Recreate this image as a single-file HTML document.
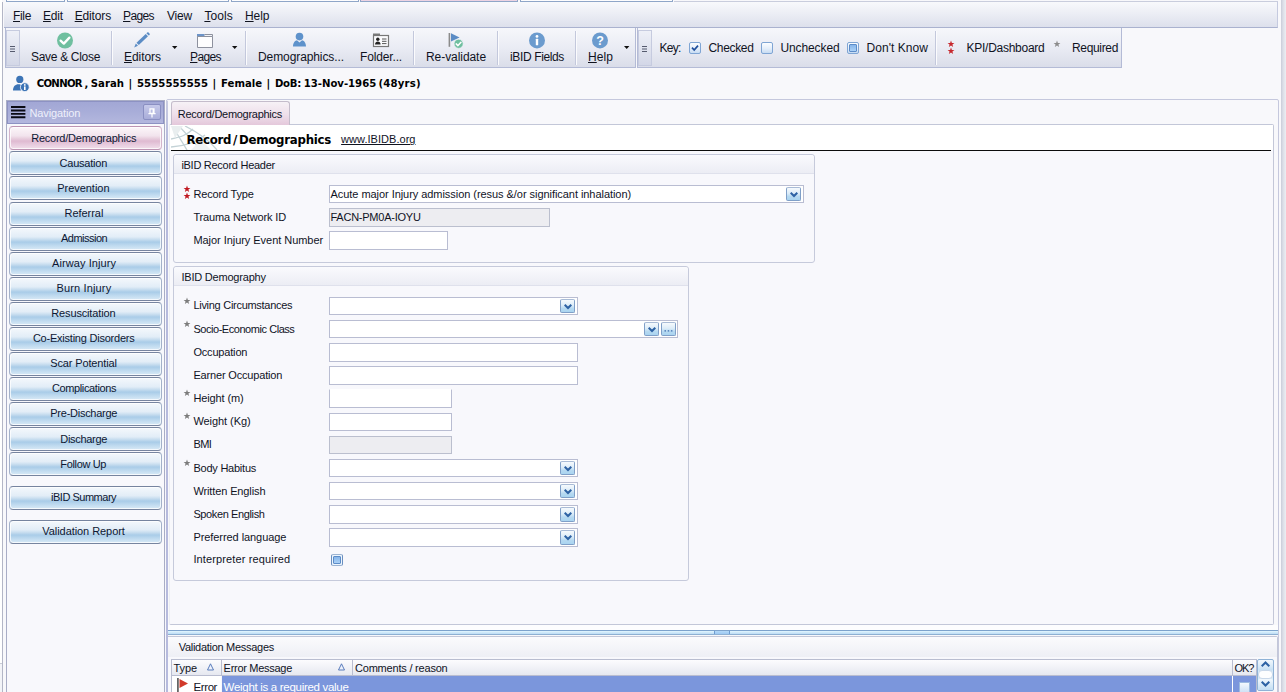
<!DOCTYPE html><html><head><meta charset="utf-8"><title>iBID</title><style>
*{box-sizing:border-box;margin:0;padding:0}
html,body{width:1286px;height:692px;overflow:hidden;background:#f8f8fb}
body{position:relative;font-family:"Liberation Sans",sans-serif;font-size:11px;color:#10131f}
.a{position:absolute}
.t{position:absolute;white-space:pre}
u{text-decoration:underline;text-underline-offset:1px;text-decoration-thickness:1px}
.tbar{background:linear-gradient(#f6f7fb,#eaecf4 50%,#dadde9);border:1px solid #b4bbd6;border-top:0}
.grip{background:linear-gradient(#eef0f7,#d3d7e7);border:1px solid #c6cbdf}
.sep{width:1px;background:#c3c8dc;box-shadow:1px 0 0 #fbfbfd}
.nb{border:1px solid #a3b1c9;border-top-color:#76849f;border-bottom-color:#76849f;border-radius:4px;background:linear-gradient(#f4f8fc 0%,#e2edf7 40%,#c7ddef 52%,#a9cce8 64%,#c2dcf0 82%,#d9eaf6 100%);box-shadow:inset 0 0 0 1px rgba(255,255,255,.75)}
.nb.sel{border-color:#d3b4cb;border-top-color:#bd93b2;border-bottom-color:#bd93b2;background:linear-gradient(#fcf7fa 0%,#f2e4ed 40%,#e8cfde 52%,#dfbad1 64%,#e8cddf 82%,#f1dfea 100%)}
.gb{border:1px solid #c6cadb;border-radius:3px;background:#f8f8fc}
.gh{left:0;top:0;right:0;height:19px;background:linear-gradient(#fafafd,#ecedf4);border-bottom:1px solid #dfe1ec;border-radius:3px 3px 0 0}
.in{background:#fff;border:1px solid #b9bdd2}
.in.ro{background:#ededf1;border-color:#bbbfce}
.dd{border:1px solid #7f9fc8;border-top-color:#a9bbd6;border-radius:2px;background:linear-gradient(#f6fafd,#dcecf8 45%,#b6d9f1 70%,#a9d4f0)}
</style></head><body>
<div class="a" style="left:0px;top:0px;width:2px;height:692px;background:#fff"></div>
<div class="a" style="left:2px;top:2px;width:1px;height:690px;background:#b3b6c6"></div>
<div class="a" style="left:0px;top:663px;width:2px;height:1px;background:#c9ccd6"></div>
<div class="a" style="left:0px;top:664px;width:2px;height:28px;background:#f3f4f8"></div>
<div class="a" style="left:1281px;top:0px;width:5px;height:692px;background:linear-gradient(90deg,#c9ccd9,#dcdee7 40%,#eceef3)"></div>
<div class="a" style="left:6px;top:0px;width:59px;height:2px;background:#fdfdfe;border:1px solid #8fa6c8;border-top:0"></div>
<div class="a" style="left:67px;top:0px;width:162px;height:2px;background:#fdfdfe;border:1px solid #8fa6c8;border-top:0"></div>
<div class="a" style="left:231px;top:0px;width:128px;height:2px;background:#fdfdfe;border:1px solid #8fa6c8;border-top:0"></div>
<div class="a" style="left:360px;top:0px;width:158px;height:2px;background:#ecd3e3;border:1px solid #8fa6c8;border-top:0"></div>
<div class="a" style="left:520px;top:0px;width:153px;height:2px;background:#fdfdfe;border:1px solid #8fa6c8;border-top:0"></div>
<div class="a" style="left:674px;top:1px;width:604px;height:1px;background:#c9cddd"></div>
<div class="a" style="left:4px;top:2px;width:1274px;height:26px;background:linear-gradient(#f8f9fc,#eceef5 45%,#dde0ec);border-bottom:1px solid #aab2cf;border-right:1px solid #c5cadf"></div>
<div class="t" style='left:13.0px;top:8.24px;font-size:12px;letter-spacing:-0.340px;line-height:16px;height:16px'><u>F</u>ile</div>
<div class="t" style='left:43.0px;top:8.24px;font-size:12px;letter-spacing:-0.176px;line-height:16px;height:16px'><u>E</u>dit</div>
<div class="t" style='left:74.7px;top:8.24px;font-size:12px;letter-spacing:-0.151px;line-height:16px;height:16px'><u>E</u>ditors</div>
<div class="t" style='left:123.0px;top:8.24px;font-size:12px;letter-spacing:-0.609px;line-height:16px;height:16px'><u>P</u>ages</div>
<div class="t" style='left:167.0px;top:8.24px;font-size:12px;letter-spacing:-0.199px;line-height:16px;height:16px'>View</div>
<div class="t" style='left:204.4px;top:8.24px;font-size:12px;letter-spacing:0.057px;line-height:16px;height:16px'><u>T</u>ools</div>
<div class="t" style='left:245.0px;top:8.24px;font-size:12px;letter-spacing:-0.072px;line-height:16px;height:16px'><u>H</u>elp</div>
<div class="a tbar" style="left:5px;top:28px;width:631px;height:40px;"></div>
<div class="a tbar" style="left:637px;top:28px;width:485px;height:40px;"></div>
<div class="a grip" style="left:6px;top:30px;width:14px;height:36px;"></div>
<svg class="a" style="left:10px;top:45.5px" width="6" height="7" viewBox="0 0 6 7"><path d="M0 0.5 H5 M0 3 H5 M0 5.5 H5" stroke="#555a6e" stroke-width="1"/></svg>
<div class="a grip" style="left:638px;top:30px;width:14px;height:36px;"></div>
<svg class="a" style="left:642px;top:45.5px" width="6" height="7" viewBox="0 0 6 7"><path d="M0 0.5 H5 M0 3 H5 M0 5.5 H5" stroke="#555a6e" stroke-width="1"/></svg>
<div class="a sep" style="left:111px;top:31px;width:1px;height:34px;"></div>
<div class="a sep" style="left:245px;top:31px;width:1px;height:34px;"></div>
<div class="a sep" style="left:413px;top:31px;width:1px;height:34px;"></div>
<div class="a sep" style="left:497px;top:31px;width:1px;height:34px;"></div>
<div class="a sep" style="left:575px;top:31px;width:1px;height:34px;"></div>
<div class="a sep" style="left:935px;top:31px;width:1px;height:34px;"></div>
<div class="t" style='left:31.0px;top:49.14px;font-size:12px;letter-spacing:-0.309px;line-height:16px;height:16px'>Save &amp; Close</div>
<div class="t" style='left:124.0px;top:49.14px;font-size:12px;letter-spacing:-0.051px;line-height:16px;height:16px'><u>E</u>ditors</div>
<div class="t" style='left:190.0px;top:49.14px;font-size:12px;letter-spacing:-0.609px;line-height:16px;height:16px'><u>P</u>ages</div>
<div class="t" style='left:258.0px;top:49.14px;font-size:12px;letter-spacing:-0.092px;line-height:16px;height:16px'>Demographics...</div>
<div class="t" style='left:360.0px;top:49.14px;font-size:12px;letter-spacing:-0.151px;line-height:16px;height:16px'>Folder...</div>
<div class="t" style='left:426.0px;top:49.14px;font-size:12px;letter-spacing:-0.064px;line-height:16px;height:16px'>Re-validate</div>
<div class="t" style='left:510.0px;top:49.14px;font-size:12px;letter-spacing:-0.365px;line-height:16px;height:16px'>iBID Fields</div>
<div class="t" style='left:588.0px;top:49.14px;font-size:12px;letter-spacing:0.078px;line-height:16px;height:16px'><u>H</u>elp</div>
<div class="t" style='left:659.5px;top:39.84px;font-size:12px;letter-spacing:-0.754px;line-height:16px;height:16px'>Key:</div>
<div class="t" style='left:708.5px;top:39.84px;font-size:12px;letter-spacing:-0.339px;line-height:16px;height:16px'>Checked</div>
<div class="t" style='left:780.5px;top:39.84px;font-size:12px;letter-spacing:-0.116px;line-height:16px;height:16px'>Unchecked</div>
<div class="t" style='left:866.5px;top:39.84px;font-size:12px;letter-spacing:0.050px;line-height:16px;height:16px'>Don't Know</div>
<div class="t" style='left:966.5px;top:39.84px;font-size:12px;letter-spacing:-0.261px;line-height:16px;height:16px'>KPI/Dashboard</div>
<div class="t" style='left:1072.0px;top:39.84px;font-size:12px;letter-spacing:-0.338px;line-height:16px;height:16px'>Required</div>
<svg class="a" style="left:56px;top:32px" width="18" height="18" viewBox="0 0 18 18"><circle cx="9" cy="8.5" r="8" fill="#6fbf9f"/><path d="M4.6 8.6 L7.8 11.6 L13.4 5.6" fill="none" stroke="#fff" stroke-width="2.3" stroke-linecap="round" stroke-linejoin="round"/></svg>
<svg class="a" style="left:133px;top:32px" width="19" height="17" viewBox="0 0 19 17"><path d="M1.2 15.4 L2.8 11.5 L5 13.7 Z" fill="#5b8cc5"/><path d="M3.5 10.7 L12.7 1.9 L15 4.2 L5.8 13 Z" fill="#5b8cc5"/><path d="M13.4 1.2 L14.2 0.5 Q14.9 0 15.6 0.6 L16.5 1.5 Q17.1 2.2 16.5 2.9 L15.7 3.6 Z" fill="#5b8cc5"/></svg>
<svg class="a" style="left:196px;top:33px" width="18" height="16" viewBox="0 0 18 16"><rect x="1" y="1" width="7.5" height="3" fill="#6d94c8"/><path d="M1.5 3.5 H16.5 V14.5 H1.5 Z" fill="#fdfdfe" stroke="#8d919e" stroke-width="1"/><path d="M8.5 1.5 H16.5 V3.5" fill="none" stroke="#8d919e" stroke-width="1"/></svg>
<svg class="a" style="left:292px;top:32px" width="15" height="16" viewBox="0 0 15 16"><circle cx="7.5" cy="4.6" r="3.8" fill="#5e92cb"/><path d="M1 14.6 C1 10.5 3.2 8.6 5 8.2 L7.5 10.4 L10 8.2 C11.8 8.6 14 10.5 14 14.6 Z" fill="#5e92cb"/></svg>
<svg class="a" style="left:372px;top:33px" width="18" height="15" viewBox="0 0 18 15"><rect x="1" y="0.5" width="7" height="2.5" fill="#7a7a7a"/><rect x="1.5" y="2.5" width="15" height="11" fill="#fbfbfd" stroke="#777" stroke-width="1.2"/><circle cx="5.8" cy="6.3" r="1.7" fill="#222"/><path d="M3 11.5 C3 9.2 4.4 8.4 5.8 8.4 C7.2 8.4 8.6 9.2 8.6 11.5 Z" fill="#222"/><path d="M10 6 H14.5 M10 8.3 H14.5 M10 10.6 H14.5" stroke="#555" stroke-width="1"/></svg>
<svg class="a" style="left:447px;top:32px" width="18" height="18" viewBox="0 0 18 18"><rect x="1.6" y="1" width="1.6" height="13.8" fill="#8b8b8b"/><path d="M4 1.2 L12.6 5.4 L4 9.6 Z" fill="#5b8cc5"/><circle cx="11.6" cy="11.8" r="4.6" fill="#6fbf9f" stroke="#eef0f7" stroke-width="0.8"/><path d="M9.2 11.9 L11 13.6 L14 10.2" fill="none" stroke="#fff" stroke-width="1.5" stroke-linecap="round" stroke-linejoin="round"/></svg>
<svg class="a" style="left:528px;top:32px" width="18" height="18" viewBox="0 0 18 18"><circle cx="9" cy="8.4" r="8" fill="#6b9bce"/><circle cx="9" cy="4.4" r="1.4" fill="#fff"/><rect x="7.8" y="6.8" width="2.4" height="6.4" rx="0.5" fill="#fff"/></svg>
<svg class="a" style="left:591px;top:32px" width="18" height="18" viewBox="0 0 18 18"><circle cx="9" cy="8.4" r="8" fill="#6b9bce"/><text x="9" y="12.6" text-anchor="middle" font-family="Liberation Sans, sans-serif" font-weight="bold" font-size="12.5" fill="#fff">?</text></svg>
<svg class="a" style="left:172px;top:46px" width="6" height="4" viewBox="0 0 6 4"><path d="M0 0 H5.4 L2.7 3 Z" fill="#111"/></svg>
<svg class="a" style="left:231.5px;top:46px" width="6" height="4" viewBox="0 0 6 4"><path d="M0 0 H5.4 L2.7 3 Z" fill="#111"/></svg>
<svg class="a" style="left:624px;top:46.3px" width="6" height="4" viewBox="0 0 6 4"><path d="M0 0 H5.4 L2.7 3 Z" fill="#111"/></svg>
<div class="a" style="left:689px;top:42px;width:12px;height:12px;border:1px solid #7fa5d4;border-radius:2px;background:linear-gradient(#fbfdff,#e4eefa 55%,#c7dcf3)"></div>
<svg class="a" style="left:691px;top:44px" width="8" height="8" viewBox="0 0 8 8"><path d="M1 3.6 L3.2 6 L7 1.6" fill="none" stroke="#1f4e9c" stroke-width="1.7"/></svg>
<div class="a" style="left:761px;top:42px;width:12px;height:12px;border:1px solid #7fa5d4;border-radius:2px;background:linear-gradient(#fbfdff,#e4eefa 55%,#c7dcf3)"></div>
<div class="a" style="left:847px;top:42px;width:12px;height:12px;border:1px solid #7fa5d4;border-radius:2px;background:linear-gradient(#fbfdff,#e4eefa 55%,#c7dcf3)"></div>
<div class="a" style="left:849px;top:44px;width:8px;height:8px;background:linear-gradient(#86b5ea,#abd1f6);border:1px solid #5d8cc8;border-radius:1px"></div>
<svg class="a" style="left:947px;top:39.5px" width="8" height="8" viewBox="0 0 8 8"><path d="M4.00,0.50 L4.89,2.88 L7.42,2.99 L5.44,4.57 L6.12,7.01 L4.00,5.61 L1.88,7.01 L2.56,4.57 L0.58,2.99 L3.11,2.88Z" fill="#c6282d"/></svg>
<svg class="a" style="left:947px;top:46.5px" width="8" height="8" viewBox="0 0 8 8"><path d="M4.00,0.50 L4.89,2.88 L7.42,2.99 L5.44,4.57 L6.12,7.01 L4.00,5.61 L1.88,7.01 L2.56,4.57 L0.58,2.99 L3.11,2.88Z" fill="#c6282d"/></svg>
<svg class="a" style="left:1053px;top:39.5px" width="8" height="8" viewBox="0 0 8 8"><path d="M4.00,0.50 L4.89,2.88 L7.42,2.99 L5.44,4.57 L6.12,7.01 L4.00,5.61 L1.88,7.01 L2.56,4.57 L0.58,2.99 L3.11,2.88Z" fill="#8c8c8c"/></svg>
<svg class="a" style="left:12px;top:74px" width="20" height="20" viewBox="0 0 20 20"><circle cx="7.8" cy="5.4" r="3.6" fill="#3c74b6"/><path d="M1 16.6 C1 12.4 3.4 10.2 6.4 10.2 C8 10.2 9.4 10.8 10.2 11.8 C9 13 8.6 14.6 9 16.6 Z" fill="#3c74b6"/><circle cx="12.8" cy="13.2" r="4.4" fill="#3c74b6" stroke="#f7f7fb" stroke-width="0.8"/><circle cx="12.8" cy="10.9" r="0.9" fill="#fff"/><rect x="12" y="12.4" width="1.6" height="3.6" fill="#fff"/></svg>
<div class="t" style='left:36.7px;top:75.61px;font-size:11.25px;letter-spacing:-0.679px;line-height:16px;height:16px;font-family:"DejaVu Sans Condensed","DejaVu Sans",sans-serif;font-weight:bold;color:#000'>CONNOR</div>
<div class="t" style='left:84.6px;top:75.61px;font-size:11.25px;letter-spacing:0.000px;line-height:16px;height:16px;font-family:"DejaVu Sans Condensed","DejaVu Sans",sans-serif;font-weight:bold;color:#000'>,</div>
<div class="t" style='left:90.8px;top:75.61px;font-size:11.25px;letter-spacing:0.009px;line-height:16px;height:16px;font-family:"DejaVu Sans Condensed","DejaVu Sans",sans-serif;font-weight:bold;color:#000'>Sarah</div>
<div class="t" style='left:128.6px;top:75.61px;font-size:11.25px;letter-spacing:0.000px;line-height:16px;height:16px;font-family:"DejaVu Sans Condensed","DejaVu Sans",sans-serif;font-weight:bold;color:#000'>|</div>
<div class="t" style='left:137.0px;top:75.61px;font-size:11.25px;letter-spacing:0.056px;line-height:16px;height:16px;font-family:"DejaVu Sans Condensed","DejaVu Sans",sans-serif;font-weight:bold;color:#000'>5555555555</div>
<div class="t" style='left:212.4px;top:75.61px;font-size:11.25px;letter-spacing:0.000px;line-height:16px;height:16px;font-family:"DejaVu Sans Condensed","DejaVu Sans",sans-serif;font-weight:bold;color:#000'>|</div>
<div class="t" style='left:221.0px;top:75.61px;font-size:11.25px;letter-spacing:0.026px;line-height:16px;height:16px;font-family:"DejaVu Sans Condensed","DejaVu Sans",sans-serif;font-weight:bold;color:#000'>Female</div>
<div class="t" style='left:266.4px;top:75.61px;font-size:11.25px;letter-spacing:0.000px;line-height:16px;height:16px;font-family:"DejaVu Sans Condensed","DejaVu Sans",sans-serif;font-weight:bold;color:#000'>|</div>
<div class="t" style='left:274.9px;top:75.61px;font-size:11.25px;letter-spacing:-0.256px;line-height:16px;height:16px;font-family:"DejaVu Sans Condensed","DejaVu Sans",sans-serif;font-weight:bold;color:#000'>DoB:</div>
<div class="t" style='left:303.7px;top:75.61px;font-size:11.25px;letter-spacing:-0.017px;line-height:16px;height:16px;font-family:"DejaVu Sans Condensed","DejaVu Sans",sans-serif;font-weight:bold;color:#000'>13-Nov-1965</div>
<div class="t" style='left:378.4px;top:75.61px;font-size:11.25px;letter-spacing:0.207px;line-height:16px;height:16px;font-family:"DejaVu Sans Condensed","DejaVu Sans",sans-serif;font-weight:bold;color:#000'>(48yrs)</div>
<div class="a" style="left:6px;top:100px;width:159px;height:600px;border:1px solid #a9adc6;background:#f8f8fc"></div>
<div class="a" style="left:7px;top:101px;width:157px;height:22.5px;background:linear-gradient(#a2a7d5,#a9aed9 50%,#b3b7de);border:1px solid #8d92c3"></div>
<svg class="a" style="left:11px;top:106px" width="15" height="13" viewBox="0 0 15 13"><path d="M0 1 H14.4 M0 4.45 H14.4 M0 7.9 H14.4 M0 11.3 H14.4" stroke="#0a0a14" stroke-width="1.9"/></svg>
<div class="a" style="left:143px;top:104px;width:18px;height:16px;border:1px solid #8a8fc2;border-radius:2px;background:linear-gradient(#c6c9ea,#a9add9)"></div>
<svg class="a" style="left:148px;top:107.5px" width="8" height="10" viewBox="0 0 8 10"><path d="M2 0.8 H6 V5.4 H2 Z M0.4 5.6 H7.6 M4 5.6 V9.4" fill="none" stroke="#fff" stroke-width="1.2"/><rect x="4.6" y="1" width="1.4" height="4.4" fill="#fff"/></svg>
<div class="t" style='left:29.5px;top:104.99px;font-size:11px;letter-spacing:-0.128px;line-height:16px;height:16px;color:#eef0fb'>Navigation</div>
<div class="a nb sel" style="left:9px;top:126px;width:153px;height:24px;"></div>
<div class="t" style='left:31.2px;top:130.19px;font-size:11px;letter-spacing:-0.234px;line-height:16px;height:16px;color:#0d1733'>Record/Demographics</div>
<div class="a nb" style="left:9px;top:151px;width:153px;height:24px;"></div>
<div class="t" style='left:59.6px;top:155.19px;font-size:11px;letter-spacing:-0.227px;line-height:16px;height:16px;color:#0d1733'>Causation</div>
<div class="a nb" style="left:9px;top:176px;width:153px;height:24px;"></div>
<div class="t" style='left:57.2px;top:180.19px;font-size:11px;letter-spacing:-0.029px;line-height:16px;height:16px;color:#0d1733'>Prevention</div>
<div class="a nb" style="left:9px;top:202px;width:153px;height:24px;"></div>
<div class="t" style='left:64.5px;top:205.19px;font-size:11px;letter-spacing:-0.041px;line-height:16px;height:16px;color:#0d1733'>Referral</div>
<div class="a nb" style="left:9px;top:227px;width:153px;height:24px;"></div>
<div class="t" style='left:61.0px;top:230.19px;font-size:11px;letter-spacing:-0.517px;line-height:16px;height:16px;color:#0d1733'>Admission</div>
<div class="a nb" style="left:9px;top:252px;width:153px;height:24px;"></div>
<div class="t" style='left:52.0px;top:255.19px;font-size:11px;letter-spacing:0.087px;line-height:16px;height:16px;color:#0d1733'>Airway Injury</div>
<div class="a nb" style="left:9px;top:277px;width:153px;height:24px;"></div>
<div class="t" style='left:56.5px;top:280.19px;font-size:11px;letter-spacing:0.145px;line-height:16px;height:16px;color:#0d1733'>Burn Injury</div>
<div class="a nb" style="left:9px;top:302px;width:153px;height:24px;"></div>
<div class="t" style='left:51.3px;top:305.19px;font-size:11px;letter-spacing:-0.150px;line-height:16px;height:16px;color:#0d1733'>Resuscitation</div>
<div class="a nb" style="left:9px;top:327px;width:153px;height:24px;"></div>
<div class="t" style='left:32.9px;top:330.19px;font-size:11px;letter-spacing:-0.227px;line-height:16px;height:16px;color:#0d1733'>Co-Existing Disorders</div>
<div class="a nb" style="left:9px;top:352px;width:153px;height:24px;"></div>
<div class="t" style='left:50.3px;top:355.19px;font-size:11px;letter-spacing:-0.142px;line-height:16px;height:16px;color:#0d1733'>Scar Potential</div>
<div class="a nb" style="left:9px;top:377px;width:153px;height:24px;"></div>
<div class="t" style='left:52.0px;top:380.19px;font-size:11px;letter-spacing:-0.384px;line-height:16px;height:16px;color:#0d1733'>Complications</div>
<div class="a nb" style="left:9px;top:402px;width:153px;height:24px;"></div>
<div class="t" style='left:50.3px;top:405.19px;font-size:11px;letter-spacing:-0.262px;line-height:16px;height:16px;color:#0d1733'>Pre-Discharge</div>
<div class="a nb" style="left:9px;top:427px;width:153px;height:24px;"></div>
<div class="t" style='left:60.3px;top:431.19px;font-size:11px;letter-spacing:-0.303px;line-height:16px;height:16px;color:#0d1733'>Discharge</div>
<div class="a nb" style="left:9px;top:452px;width:153px;height:24px;"></div>
<div class="t" style='left:60.3px;top:456.19px;font-size:11px;letter-spacing:-0.345px;line-height:16px;height:16px;color:#0d1733'>Follow Up</div>
<div class="a nb" style="left:9px;top:486px;width:153px;height:23.5px;"></div>
<div class="t" style='left:51.0px;top:489.19px;font-size:11px;letter-spacing:-0.484px;line-height:16px;height:16px;color:#0d1733'>iBID Summary</div>
<div class="a nb" style="left:9px;top:520px;width:153px;height:23.5px;"></div>
<div class="t" style='left:42.3px;top:523.19px;font-size:11px;letter-spacing:-0.063px;line-height:16px;height:16px;color:#0d1733'>Validation Report</div>
<div class="a" style="left:166px;top:99px;width:1113px;height:600px;border:1px solid #c5c8dd;border-radius:2px;background:#f8f8fb"></div>
<div class="a" style="left:166px;top:101px;width:2px;height:600px;background:linear-gradient(#c9cce2,#b6badd 40px)"></div>
<div class="a" style="left:169px;top:124px;width:1105px;height:500.5px;border:1px solid #c3c7d8;border-left-color:#eceef3;border-radius:2px;background:#f8f8fc"></div>
<div class="a" style="left:171px;top:101px;width:119px;height:24px;border:1px solid #c4bccb;border-bottom:0;border-radius:3px 3px 0 0;background:linear-gradient(#f6f1f6,#eedfea 55%,#e4c8db)"></div>
<div class="t" style='left:177.8px;top:106.19px;font-size:11px;letter-spacing:-0.276px;line-height:16px;height:16px'>Record/Demographics</div>
<div class="a" style="left:170px;top:125px;width:1103px;height:25px;background:#fff"></div>
<svg class="a" style="left:171px;top:126px" width="54" height="24" viewBox="0 0 54 24"><g fill="none" stroke="#c3d2d6" stroke-width="1.3"><path d="M2 1 L16 24"/><path d="M8 0 L30 24"/><path d="M14 0 C26 6 38 14 46 24"/><path d="M0 13 C10 11 16 9 22 3"/><path d="M0 21 C14 20 26 16 34 9"/></g><path d="M0 0 L12 0 L4 12 Z" fill="#e9eeef"/><path d="M20 24 L40 24 L30 14 Z" fill="#eef2f3"/></svg>
<div class="a" style="left:170.5px;top:150px;width:1100.5px;height:1.2px;background:#0c0c0c"></div>
<div class="t" style='left:186.4px;top:132.13px;font-size:11.75px;letter-spacing:-0.246px;line-height:16px;height:16px;font-family:"DejaVu Sans",sans-serif;font-weight:bold;color:#000'>Record<span style="padding:0 1.9px">/</span>Demographics</div>
<div class="t" style='left:341.1px;top:131.49px;font-size:11px;letter-spacing:0.033px;line-height:16px;height:16px;text-decoration:underline;text-underline-offset:1px'>www.IBIDB.org</div>
<div class="a gb" style="left:173px;top:154px;width:642px;height:109px;"><div class="a gh"></div></div>
<div class="t" style='left:181.4px;top:156.89px;font-size:11px;letter-spacing:-0.274px;line-height:16px;height:16px'>iBID Record Header</div>
<div class="a gb" style="left:173px;top:266px;width:516px;height:315px;"><div class="a gh"></div></div>
<div class="t" style='left:181.4px;top:268.89px;font-size:11px;letter-spacing:-0.202px;line-height:16px;height:16px'>IBID Demography</div>
<div class="t" style='left:193.4px;top:185.89px;font-size:11px;letter-spacing:-0.161px;line-height:16px;height:16px'>Record Type</div>
<svg class="a" style="left:183px;top:184.7px" width="8" height="8" viewBox="0 0 8 8"><path d="M4.00,0.50 L4.89,2.88 L7.42,2.99 L5.44,4.57 L6.12,7.01 L4.00,5.61 L1.88,7.01 L2.56,4.57 L0.58,2.99 L3.11,2.88Z" fill="#c01820"/></svg>
<svg class="a" style="left:183px;top:192.3px" width="8" height="8" viewBox="0 0 8 8"><path d="M4.00,0.50 L4.89,2.88 L7.42,2.99 L5.44,4.57 L6.12,7.01 L4.00,5.61 L1.88,7.01 L2.56,4.57 L0.58,2.99 L3.11,2.88Z" fill="#c01820"/></svg>
<div class="a in" style="left:329px;top:185px;width:475px;height:18px;"></div>
<div class="a dd" style="left:786px;top:187px;width:15px;height:14px;"></div>
<svg class="a" style="left:789.5px;top:191.6px" width="8" height="6" viewBox="0 0 8 6"><path d="M0 1.4 L1.4 0 L4 2.6 L6.6 0 L8 1.4 L4 5.4 Z" fill="#2d62a4"/></svg>
<div class="t" style='left:330.5px;top:185.89px;font-size:11px;letter-spacing:-0.051px;line-height:16px;height:16px'>Acute major Injury admission (resus &amp;/or significant inhalation)</div>
<div class="t" style='left:193.4px;top:208.89px;font-size:11px;letter-spacing:-0.133px;line-height:16px;height:16px'>Trauma Network ID</div>
<div class="a in ro" style="left:329px;top:208px;width:221px;height:19px;"></div>
<div class="t" style='left:330.5px;top:208.89px;font-size:11px;letter-spacing:-0.244px;line-height:16px;height:16px'>FACN-PM0A-IOYU</div>
<div class="t" style='left:193.4px;top:231.89px;font-size:11px;letter-spacing:-0.045px;line-height:16px;height:16px'>Major Injury Event Number</div>
<div class="a in" style="left:329px;top:231px;width:119px;height:19px;"></div>
<div class="t" style='left:193.4px;top:297.39px;font-size:11px;letter-spacing:-0.282px;line-height:16px;height:16px'>Living Circumstances</div>
<svg class="a" style="left:183px;top:296.9px" width="8" height="8" viewBox="0 0 8 8"><path d="M4.00,0.50 L4.89,2.88 L7.42,2.99 L5.44,4.57 L6.12,7.01 L4.00,5.61 L1.88,7.01 L2.56,4.57 L0.58,2.99 L3.11,2.88Z" fill="#7c7c7c"/></svg>
<div class="a in" style="left:329px;top:297px;width:249px;height:18px;"></div>
<div class="a dd" style="left:560px;top:299px;width:15px;height:14px;"></div>
<svg class="a" style="left:563.5px;top:303.6px" width="8" height="6" viewBox="0 0 8 6"><path d="M0 1.4 L1.4 0 L4 2.6 L6.6 0 L8 1.4 L4 5.4 Z" fill="#2d62a4"/></svg>
<div class="t" style='left:193.4px;top:320.89px;font-size:11px;letter-spacing:-0.452px;line-height:16px;height:16px'>Socio-Economic Class</div>
<svg class="a" style="left:183px;top:320.4px" width="8" height="8" viewBox="0 0 8 8"><path d="M4.00,0.50 L4.89,2.88 L7.42,2.99 L5.44,4.57 L6.12,7.01 L4.00,5.61 L1.88,7.01 L2.56,4.57 L0.58,2.99 L3.11,2.88Z" fill="#7c7c7c"/></svg>
<div class="a in" style="left:329px;top:320px;width:349px;height:18px;"></div>
<div class="a dd" style="left:644px;top:322px;width:15px;height:14px;"></div>
<svg class="a" style="left:647.5px;top:326.6px" width="8" height="6" viewBox="0 0 8 6"><path d="M0 1.4 L1.4 0 L4 2.6 L6.6 0 L8 1.4 L4 5.4 Z" fill="#2d62a4"/></svg>
<div class="a dd" style="left:661px;top:322px;width:15px;height:14px;"></div>
<svg class="a" style="left:664px;top:330px" width="9" height="2" viewBox="0 0 9 2"><path d="M0.5 0.8 H2 M3.7 0.8 H5.2 M6.9 0.8 H8.4" stroke="#3b6cae" stroke-width="1.2"/></svg>
<div class="t" style='left:193.4px;top:343.89px;font-size:11px;letter-spacing:-0.176px;line-height:16px;height:16px'>Occupation</div>
<div class="a in" style="left:329px;top:343px;width:249px;height:19px;"></div>
<div class="t" style='left:193.4px;top:366.89px;font-size:11px;letter-spacing:-0.172px;line-height:16px;height:16px'>Earner Occupation</div>
<div class="a in" style="left:329px;top:366px;width:249px;height:19px;"></div>
<div class="t" style='left:193.4px;top:389.89px;font-size:11px;letter-spacing:-0.124px;line-height:16px;height:16px'>Height (m)</div>
<svg class="a" style="left:183px;top:389.4px" width="8" height="8" viewBox="0 0 8 8"><path d="M4.00,0.50 L4.89,2.88 L7.42,2.99 L5.44,4.57 L6.12,7.01 L4.00,5.61 L1.88,7.01 L2.56,4.57 L0.58,2.99 L3.11,2.88Z" fill="#7c7c7c"/></svg>
<div class="a in" style="left:329px;top:389px;width:123px;height:19px;border-top-color:transparent"></div>
<div class="t" style='left:193.4px;top:412.89px;font-size:11px;letter-spacing:-0.052px;line-height:16px;height:16px'>Weight (Kg)</div>
<svg class="a" style="left:183px;top:412.4px" width="8" height="8" viewBox="0 0 8 8"><path d="M4.00,0.50 L4.89,2.88 L7.42,2.99 L5.44,4.57 L6.12,7.01 L4.00,5.61 L1.88,7.01 L2.56,4.57 L0.58,2.99 L3.11,2.88Z" fill="#7c7c7c"/></svg>
<div class="a in" style="left:329px;top:413px;width:123px;height:18px;"></div>
<div class="t" style='left:193.4px;top:435.89px;font-size:11px;letter-spacing:-0.588px;line-height:16px;height:16px'>BMI</div>
<div class="a in ro" style="left:329px;top:436px;width:123px;height:18px;"></div>
<div class="t" style='left:193.4px;top:459.89px;font-size:11px;letter-spacing:-0.228px;line-height:16px;height:16px'>Body Habitus</div>
<svg class="a" style="left:183px;top:459.4px" width="8" height="8" viewBox="0 0 8 8"><path d="M4.00,0.50 L4.89,2.88 L7.42,2.99 L5.44,4.57 L6.12,7.01 L4.00,5.61 L1.88,7.01 L2.56,4.57 L0.58,2.99 L3.11,2.88Z" fill="#7c7c7c"/></svg>
<div class="a in" style="left:329px;top:459px;width:249px;height:18px;"></div>
<div class="a dd" style="left:560px;top:461px;width:15px;height:14px;"></div>
<svg class="a" style="left:563.5px;top:465.6px" width="8" height="6" viewBox="0 0 8 6"><path d="M0 1.4 L1.4 0 L4 2.6 L6.6 0 L8 1.4 L4 5.4 Z" fill="#2d62a4"/></svg>
<div class="t" style='left:193.4px;top:482.89px;font-size:11px;letter-spacing:-0.119px;line-height:16px;height:16px'>Written English</div>
<div class="a in" style="left:329px;top:482px;width:249px;height:18px;"></div>
<div class="a dd" style="left:560px;top:484px;width:15px;height:14px;"></div>
<svg class="a" style="left:563.5px;top:488.6px" width="8" height="6" viewBox="0 0 8 6"><path d="M0 1.4 L1.4 0 L4 2.6 L6.6 0 L8 1.4 L4 5.4 Z" fill="#2d62a4"/></svg>
<div class="t" style='left:193.4px;top:505.89px;font-size:11px;letter-spacing:-0.382px;line-height:16px;height:16px'>Spoken English</div>
<div class="a in" style="left:329px;top:505px;width:249px;height:19px;"></div>
<div class="a dd" style="left:560px;top:507px;width:15px;height:15px;"></div>
<svg class="a" style="left:563.5px;top:512.1px" width="8" height="6" viewBox="0 0 8 6"><path d="M0 1.4 L1.4 0 L4 2.6 L6.6 0 L8 1.4 L4 5.4 Z" fill="#2d62a4"/></svg>
<div class="t" style='left:193.4px;top:528.89px;font-size:11px;letter-spacing:-0.066px;line-height:16px;height:16px'>Preferred language</div>
<div class="a in" style="left:329px;top:528px;width:249px;height:19px;"></div>
<div class="a dd" style="left:560px;top:530px;width:15px;height:15px;"></div>
<svg class="a" style="left:563.5px;top:535.1px" width="8" height="6" viewBox="0 0 8 6"><path d="M0 1.4 L1.4 0 L4 2.6 L6.6 0 L8 1.4 L4 5.4 Z" fill="#2d62a4"/></svg>
<div class="t" style='left:193.4px;top:550.89px;font-size:11px;letter-spacing:0.131px;line-height:16px;height:16px'>Interpreter required</div>
<div class="a" style="left:331px;top:554px;width:12px;height:12px;border:1px solid #6a8fc0;border-top-color:#9db4d2;border-bottom-color:#9db4d2;border-radius:2px;background:#eef6fd"><div class="a" style="left:1px;top:1px;width:8px;height:8px;background:linear-gradient(#86b5ea,#abd1f6);border:1px solid #5d8cc8;border-radius:1px"></div></div>
<div class="a" style="left:168px;top:625px;width:1110px;height:5px;background:#fdfdfe"></div>
<div class="a" style="left:168px;top:630px;width:1110px;height:5px;background:linear-gradient(#e2f6ff,#bcdcf4);border-top:1px solid #7da3cc;border-bottom:1px solid #8eb0d2"></div>
<div class="a" style="left:714px;top:631px;width:16px;height:3px;background:linear-gradient(#b4d9f8,#9cc8f2);border-left:1px solid #6d9bd0;border-right:1px solid #6d9bd0"></div>
<div class="a" style="left:168px;top:636px;width:1110px;height:60px;border:1px solid #c3c7d8;border-left:0;border-radius:0 2px 0 0;background:#f8f8fc"></div>
<div class="a" style="left:168px;top:637px;width:1109px;height:19.5px;background:linear-gradient(#fbfbfd,#eeeff5)"></div>
<div class="t" style='left:178.7px;top:639.19px;font-size:11px;letter-spacing:-0.284px;line-height:16px;height:16px'>Validation Messages</div>
<div class="a" style="left:171px;top:659px;width:1086px;height:17px;background:linear-gradient(#fcfcfe,#e6e8f0);border:1px solid #b9bdd0"></div>
<div class="a" style="left:221px;top:660px;width:1px;height:16px;background:#b9bdd0"></div>
<div class="a" style="left:352px;top:660px;width:1px;height:16px;background:#b9bdd0"></div>
<div class="a" style="left:1232px;top:660px;width:1px;height:16px;background:#b9bdd0"></div>
<div class="a" style="left:1232px;top:676px;width:1px;height:16px;background:#fff"></div>
<div class="a" style="left:1256px;top:660px;width:1px;height:32px;background:#b9bdd0"></div>
<div class="t" style='left:173.5px;top:659.79px;font-size:11px;letter-spacing:-0.090px;line-height:16px;height:16px'>Type</div>
<div class="t" style='left:223.6px;top:659.79px;font-size:11px;letter-spacing:-0.288px;line-height:16px;height:16px'>Error Message</div>
<div class="t" style='left:355.0px;top:659.79px;font-size:11px;letter-spacing:-0.205px;line-height:16px;height:16px'>Comments / reason</div>
<div class="t" style='left:1234.4px;top:659.79px;font-size:11px;letter-spacing:-1.000px;line-height:16px;height:16px'>OK?</div>
<svg class="a" style="left:207px;top:662.5px" width="7" height="8" viewBox="0 0 7 8"><path d="M3.5 0.8 L6.5 7 H0.5 Z" fill="#eef2fb" stroke="#4a6fb5" stroke-width="0.9"/></svg>
<svg class="a" style="left:338px;top:662.5px" width="7" height="8" viewBox="0 0 7 8"><path d="M3.5 0.8 L6.5 7 H0.5 Z" fill="#eef2fb" stroke="#4a6fb5" stroke-width="0.9"/></svg>
<div class="a" style="left:171px;top:676px;width:50px;height:16px;background:#fff;border-left:1px solid #b9bdd0"></div>
<div class="a" style="left:222px;top:676px;width:1010px;height:16px;background:#7b96dc"></div>
<div class="a" style="left:1233px;top:676px;width:23px;height:16px;background:#7b96dc"></div>
<div class="t" style='left:193.6px;top:678.62px;font-size:11.5px;letter-spacing:-0.432px;line-height:16px;height:16px'>Error</div>
<div class="t" style='left:223.6px;top:678.62px;font-size:11.5px;letter-spacing:-0.302px;line-height:16px;height:16px;color:#fff'>Weight is a required value</div>
<svg class="a" style="left:176px;top:678px" width="13" height="14" viewBox="0 0 13 14"><rect x="1" y="0" width="1.8" height="14" fill="#666"/><path d="M3.5 1 L12 5.5 L3.5 10 Z" fill="#d23a2a"/></svg>
<div class="a" style="left:1239px;top:681.5px;width:11px;height:11px;border:1px solid #9dbbe0;background:linear-gradient(#f4f9fe,#cfe2f5)"></div>
<div class="a" style="left:1257px;top:659px;width:17px;height:32px;background:#d9ecf8;border:1px solid #8fb2d6;border-radius:2px"></div>
<div class="a" style="left:1258px;top:660px;width:15px;height:10.5px;background:linear-gradient(#f2f8fd,#c3def3);border-radius:2px"></div>
<svg class="a" style="left:1261px;top:661px" width="9" height="6" viewBox="0 0 9 6"><path d="M0 4.6 L1.4 6 L4.5 2.9 L7.6 6 L9 4.6 L4.5 0 Z" fill="#2d62a4"/></svg>
<div class="a" style="left:1258px;top:670px;width:15px;height:8.5px;background:#fdfeff;border:1px solid #c9d8ea;border-radius:4px"></div>
<div class="a" style="left:1258px;top:679px;width:15px;height:11px;background:linear-gradient(#f2f8fd,#c3def3);border-radius:2px"></div>
<svg class="a" style="left:1261px;top:681px" width="9" height="6" viewBox="0 0 9 6"><path d="M0 1.4 L1.4 0 L4.5 3.1 L7.6 0 L9 1.4 L4.5 6 Z" fill="#2d62a4"/></svg>
</body></html>
